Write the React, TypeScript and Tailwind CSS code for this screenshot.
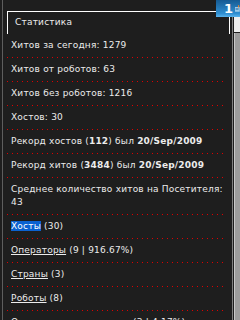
import type { ReactNode } from "react"

function Row({ children }: { children: ReactNode }) {
  return (
    <div className="pt-[5px]">
      <div className="pb-[5px] pl-[4px] leading-[13px]">{children}</div>
      <div className="h-px bg-[linear-gradient(to_right,#e00000_1px,transparent_1px)] bg-[length:5px_1px] bg-repeat-x" />
    </div>
  )
}

function Badge() {
  return (
    <div className="absolute right-0 top-0 flex h-[17px] w-[24px] items-start bg-[linear-gradient(to_bottom,#155a92,#2f8fd2_80%,#5ab4ee)] pl-[8px]">
      <span className="mt-[2px] font-['DejaVu_Sans',sans-serif] text-[13px] font-bold leading-[13px] text-white">1</span>
      <svg width="8" height="11" viewBox="0 0 8 11" className="ml-[2px] mt-[3px]">
        <rect x="0" y="3" width="8" height="8" fill="#9ccbec" />
        <rect x="1" y="5" width="5" height="1" fill="#2a6ea8" />
        <rect x="1" y="7" width="5" height="1" fill="#2a6ea8" />
        <rect x="5" y="0" width="2" height="3" fill="#f08020" />
        <rect x="5" y="4" width="2" height="1" fill="#f08020" />
      </svg>
    </div>
  )
}

export default function App() {
  return (
    <div className="relative flex h-[320px] w-[240px] overflow-hidden bg-[#1e1e1e] font-['DejaVu_Sans',sans-serif] text-[9px] tracking-[0.2px] text-[#ececec]">
      <div className="ml-[2px] flex w-[230px] flex-col border-l border-[#5e5e5e] pt-[11px]">
        <div className="ml-[4px] w-[223px] border-x border-t border-white pb-[5px] pl-[7px] pt-[4px] leading-[13px]">
          Статистика
        </div>
        <div className="ml-[4px] w-[218px]">
          <Row>Хитов за сегодня: 1279</Row>
          <Row>Хитов от роботов: 63</Row>
          <Row>Хитов без роботов: 1216</Row>
          <Row>Хостов: 30</Row>
          <Row>
            Рекорд хостов (<b>112</b>) был <b>20/Sep/2009</b>
          </Row>
          <Row>
            Рекорд хитов (<b>3484</b>) был <b>20/Sep/2009</b>
          </Row>
          <Row>
            Среднее количество хитов на Посетителя:
            <br />
            43
          </Row>
          <Row>
            <span className="bg-[#0b62d0] text-white">Хосты</span> (30)
          </Row>
          <Row>
            <span className="underline">Операторы</span> (9 | 916.67%)
          </Row>
          <Row>
            <span className="underline">Страны</span> (3)
          </Row>
          <Row>
            <span className="underline">Роботы</span> (8)
          </Row>
          <Row>
            <span className="underline">Операционные системы</span> (3 | 4.17%)
          </Row>
        </div>
      </div>
      <div className="flex w-[8px] border-l border-[#808080] pl-[1px]">
        <div className="flex w-[6px] flex-col pt-[17px]">
          <div className="h-[15px] bg-[#f0f0f0]" />
          <div className="h-px bg-[#202020]" />
          <div className="flex-1 border-l border-[#c8c8c8] bg-[#9c9c9c]" />
        </div>
      </div>
      <Badge />
    </div>
  )
}
